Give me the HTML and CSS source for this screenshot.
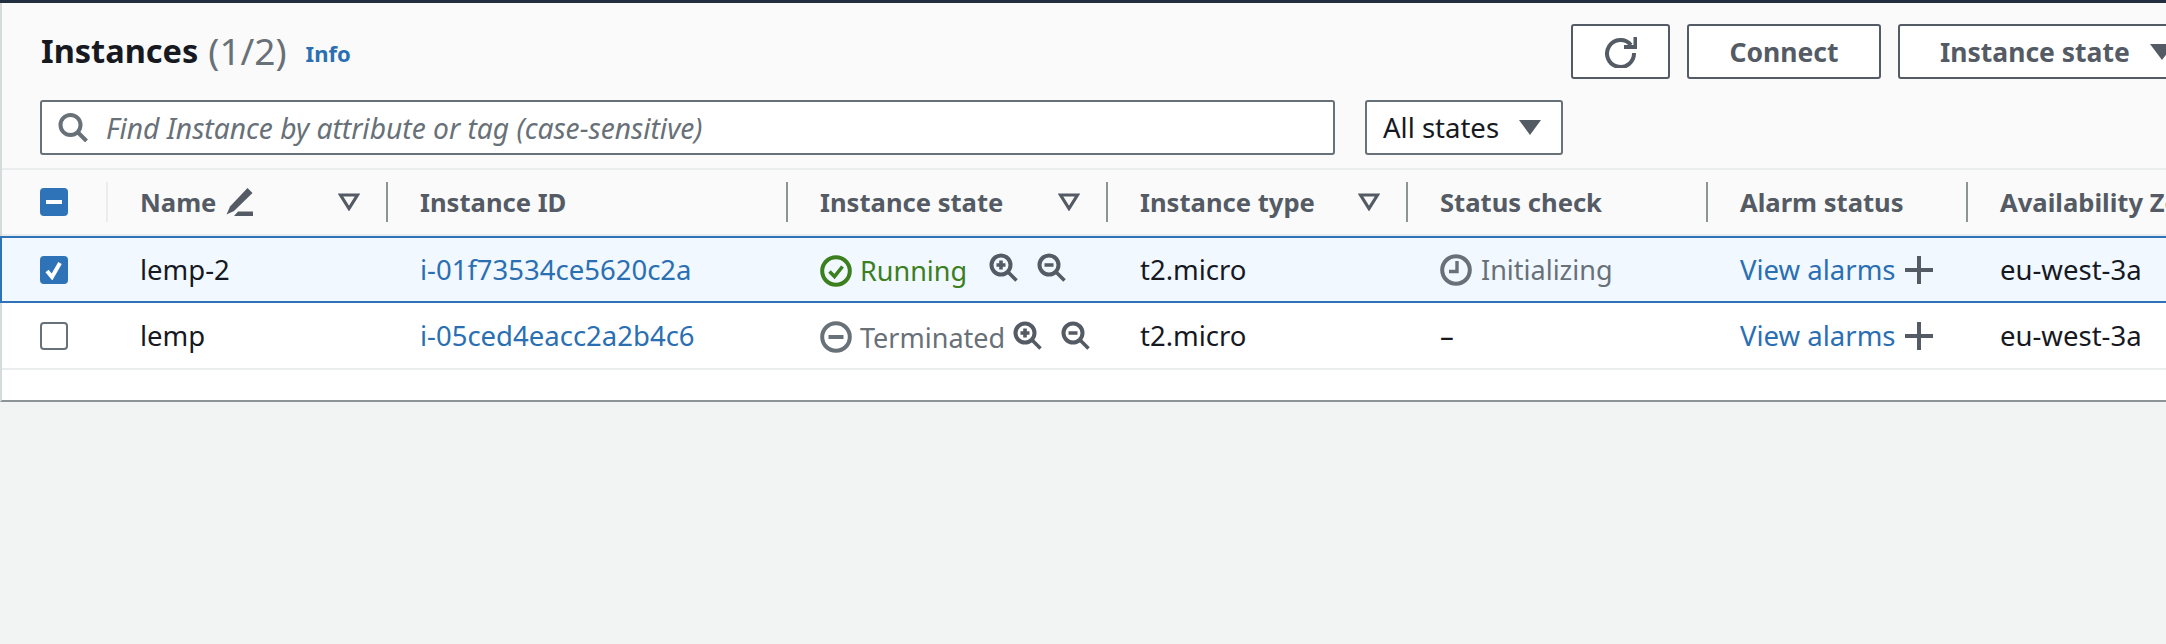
FILE: index.html
```html
<!DOCTYPE html>
<html lang="en">
<head>
<meta charset="utf-8">
<title>Instances</title>
<link rel="stylesheet" href="styles.css">
</head>
<body>
<svg class="defs" width="0" height="0" aria-hidden="true">
  <symbol id="zoom-in" viewBox="0 0 29 29"><circle cx="12" cy="12" r="9.5" fill="none" stroke="currentColor" stroke-width="4"/><path d="M19 19l8.500 8.500M12 7.500v9M7.500 12h9" fill="none" stroke="currentColor" stroke-width="3.600"/></symbol>
  <symbol id="zoom-out" viewBox="0 0 29 29"><circle cx="12" cy="12" r="9.5" fill="none" stroke="currentColor" stroke-width="4"/><path d="M19 19l8.500 8.500M7.500 12h9" fill="none" stroke="currentColor" stroke-width="3.600"/></symbol>
  <symbol id="funnel" viewBox="0 0 22 18"><path d="M2.500 2h17L11 15.500z" fill="none" stroke="currentColor" stroke-width="3.200" stroke-linejoin="miter"/></symbol>
  <symbol id="plus" viewBox="0 0 28 28"><path d="M14 0v28M0 14h28" fill="none" stroke="currentColor" stroke-width="4"/></symbol>
</svg>
<main class="panel">
  <header class="toolbar">
    <div class="toolbar-top">
      <h1 class="title">Instances <span class="count">(1/2)</span> <a class="info">Info</a></h1>
      <div class="actions">
        <button class="btn btn-icon" aria-label="Refresh">
          <svg class="icon-refresh" viewBox="0 0 33 32"><path d="M27 9A13.500 13.500 0 1 0 30 17" fill="none" stroke="currentColor" stroke-width="4"/><path d="M20 11h11.500V1" fill="none" stroke="currentColor" stroke-width="4"/></svg>
        </button>
        <button class="btn btn-connect">Connect</button>
        <button class="btn btn-state">Instance state <span class="caret"></span></button>
      </div>
    </div>
    <div class="toolbar-bottom">
      <label class="search">
        <svg class="icon-search" viewBox="0 0 30 29"><circle cx="12.500" cy="12" r="10" fill="none" stroke="currentColor" stroke-width="4"/><path d="M20 19.500l8.500 8.500" fill="none" stroke="currentColor" stroke-width="4"/></svg>
        <span class="placeholder">Find Instance by attribute or tag (case-sensitive)</span>
      </label>
      <div class="select">All states <span class="caret"></span></div>
    </div>
  </header>

  <section class="table">
    <div class="row head">
      <div class="cell cell-check">
        <span class="check check-on"><span class="dash"></span></span>
        <span class="divider divider-faint"></span>
      </div>
      <div class="cell">
        <span>Name</span>
        <svg class="icon-pencil" viewBox="0 0 28 28"><path d="M22.500 0l5 5L9 23l-7.500 3.500L5 18.500z" fill="currentColor"/><path d="M13 23.500h15V28H9z" fill="currentColor"/></svg>
        <svg class="icon-funnel"><use href="#funnel"/></svg>
        <span class="divider"></span>
      </div>
      <div class="cell"><span>Instance ID</span><span class="divider"></span></div>
      <div class="cell"><span>Instance state</span><svg class="icon-funnel"><use href="#funnel"/></svg><span class="divider"></span></div>
      <div class="cell"><span>Instance type</span><svg class="icon-funnel"><use href="#funnel"/></svg><span class="divider"></span></div>
      <div class="cell"><span>Status check</span><span class="divider"></span></div>
      <div class="cell"><span>Alarm status</span><span class="divider"></span></div>
      <div class="cell cell-clip"><span>Availability Zone</span></div>
    </div>

    <div class="row selected">
      <div class="cell cell-check">
        <span class="check check-on">
          <svg class="icon-tick" viewBox="0 0 20 20"><path d="M3 11l5 6L16 3" fill="none" stroke="#fff" stroke-width="4"/></svg>
        </span>
      </div>
      <div class="cell">lemp-2</div>
      <div class="cell"><a class="link">i-01f73534ce5620c2a</a></div>
      <div class="cell state-cell">
        <svg class="icon-state green" viewBox="0 0 32 32"><circle cx="16" cy="16" r="13.800" fill="none" stroke="currentColor" stroke-width="4"/><path d="M9.500 16.500l5 5 8-10" fill="none" stroke="currentColor" stroke-width="3.600"/></svg>
        <span class="green state-label">Running</span>
        <span class="zooms zooms-running"><svg class="icon-zoom"><use href="#zoom-in"/></svg><svg class="icon-zoom"><use href="#zoom-out"/></svg></span>
      </div>
      <div class="cell">t2.micro</div>
      <div class="cell muted">
        <svg class="icon-clock" viewBox="0 0 32 32"><circle cx="16" cy="16" r="13.800" fill="none" stroke="currentColor" stroke-width="4"/><path d="M17 7v10.500H9" fill="none" stroke="currentColor" stroke-width="3.400"/></svg>
        <span class="status-label">Initializing</span>
      </div>
      <div class="cell"><a class="link">View alarms</a><svg class="icon-plus"><use href="#plus"/></svg></div>
      <div class="cell">eu-west-3a</div>
    </div>

    <div class="row row-plain">
      <div class="cell cell-check"><span class="check"></span></div>
      <div class="cell">lemp</div>
      <div class="cell"><a class="link">i-05ced4eacc2a2b4c6</a></div>
      <div class="cell state-cell">
        <svg class="icon-state muted" viewBox="0 0 32 32"><circle cx="16" cy="16" r="13.800" fill="none" stroke="currentColor" stroke-width="4"/><path d="M8.500 16h15" fill="none" stroke="currentColor" stroke-width="4"/></svg>
        <span class="muted state-label">Terminated</span>
        <span class="zooms zooms-terminated"><svg class="icon-zoom"><use href="#zoom-in"/></svg><svg class="icon-zoom"><use href="#zoom-out"/></svg></span>
      </div>
      <div class="cell">t2.micro</div>
      <div class="cell">–</div>
      <div class="cell"><a class="link">View alarms</a><svg class="icon-plus"><use href="#plus"/></svg></div>
      <div class="cell">eu-west-3a</div>
    </div>
  </section>
</main>
</body>
</html>
```
FILE: styles.css
```css
* { box-sizing: border-box; }
html, body { margin: 0; height: 100%; }
body {
  background: #f2f3f3;
  color: #16191f;
  font-family: "Noto Sans", "Open Sans", sans-serif;
  font-size: 27.5px;
  overflow: hidden;
  width: 2166px;
  height: 644px;
  border-top: 3px solid #232f3e;
}
.defs { position: absolute; }
.panel {
  border-left: 2px solid #d5dbdb;
  border-bottom: 2px solid #8d9496;
  background: #fff;
  height: 399px;
}
.toolbar {
  background: #fafafa;
  height: 167px;
  padding: 21px 0 0 38px;
  border-bottom: 2px solid #eaeded;
}
.toolbar-top { display: flex; align-items: flex-start; justify-content: space-between; height: 76px; margin-right: -39px; }
.toolbar-bottom { display: flex; gap: 30px; }
.title { margin: -1px 0 0 1px; font-size: 32.5px; font-weight: 700; line-height: 55px; display: flex; gap: 10px; }
.count { font-weight: 400; font-size: 37px; color: #687078; }
.info { font-size: 22px; color: #2b6fb3; margin-left: 9px; margin-top: 3px; }
.actions { display: flex; gap: 17px; }
.btn {
  height: 55px;
  border: 2px solid #545b64;
  border-radius: 3px;
  background: #fff;
  color: #545b64;
  font: 700 26.5px "Noto Sans", sans-serif;
  display: flex;
  align-items: center;
  justify-content: center;
  padding: 0;
}
.btn-icon { width: 99px; }
.btn-connect { width: 194px; }
.btn-state { width: 307px; gap: 20px; justify-content: flex-start; padding-left: 40px; }
.icon-refresh { width: 33px; height: 32px; }
.caret {
  width: 0; height: 0;
  border-left: 12px solid transparent;
  border-right: 12px solid transparent;
  border-top: 16px solid #545b64;
}
.search {
  width: 1295px;
  height: 55px;
  border: 2px solid #687078;
  border-radius: 3px;
  background: #fff;
  display: flex;
  align-items: center;
  gap: 18px;
  padding-left: 16px;
}
.icon-search { width: 30px; height: 29px; color: #687078; }
.placeholder { font-style: italic; font-size: 28.2px; color: #687078; }
.select {
  width: 198px;
  height: 55px;
  border: 2px solid #687078;
  border-radius: 3px;
  background: #fff;
  display: flex;
  align-items: center;
  gap: 20px;
  padding-left: 16px;
}
.select .caret { border-left-width: 11px; border-right-width: 11px; border-top-width: 15px; }
.row {
  display: grid;
  grid-template-columns: 106px 280px 400px 320px 300px 300px 260px 1fr;
  height: 67px;
  background: #fff;
  border-bottom: 2px solid #eaeded;
}
.head {
  height: 66px;
  background: #fafafa;
  font-size: 25.6px;
  font-weight: 700;
  color: #545b64;
}
.selected {
  margin-left: -2px;
  background: #f1f8ff;
  border: 2px solid #2e73b8;
  border-right: 0;
}
.cell { display: flex; align-items: center; padding-left: 32px; white-space: nowrap; min-width: 0; }
.selected .state-cell { padding-top: 2px; }
.row-plain .state-cell { padding-top: 3px; }
.cell-check { padding-left: 38px; }
.cell-clip { overflow: hidden; }
.divider { width: 2px; height: 40px; background: #8d9496; margin-left: auto; flex: none; }
.divider-faint { background: #eaeded; }
.check {
  width: 28px;
  height: 28px;
  border: 2px solid #687078;
  border-radius: 4px;
  background: #fff;
  display: flex;
  align-items: center;
  justify-content: center;
  flex: none;
}
.check-on { background: #2e73b8; border-color: #2e73b8; }
.dash { width: 16px; height: 4px; background: #fff; }
.icon-tick { width: 20px; height: 20px; }
.icon-pencil { width: 28px; height: 28px; margin-left: 9px; color: #545b64; flex: none; }
.icon-funnel { width: 22px; height: 18px; margin-left: auto; margin-right: 26px; color: #545b64; flex: none; }
.icon-funnel + .divider { margin-left: 0; }
.link { color: #2b6fb3; }
.green { color: #3b7f1e; }
.muted { color: #687078; }
.icon-state, .icon-clock { width: 32px; height: 32px; flex: none; }
.icon-clock { margin-right: 9px; }
.state-label, .status-label { font-size: 27px; }
.state-label { margin-left: 8px; }
.zooms { display: flex; color: #545b64; }
.zooms-running { gap: 19px; margin-left: 22px; margin-top: -6px; }
.zooms-terminated { gap: 19px; margin-left: 8px; margin-top: -3px; }
.icon-zoom { width: 29px; height: 29px; }
.icon-plus { width: 28px; height: 28px; margin-left: 9px; color: #545b64; flex: none; }
```
